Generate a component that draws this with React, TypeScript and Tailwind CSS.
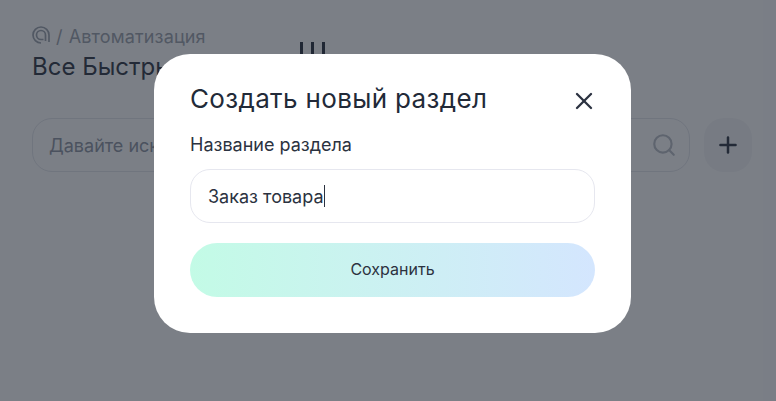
import { Plus, Search, X } from 'lucide-react';

const font = "font-['Inter','Noto_Sans',sans-serif]";

const App = () => {
  return (
    <div className={`relative h-[401px] w-[776px] overflow-hidden bg-white ${font}`}>
      {/* Page behind the modal */}
      <div className="pl-8 pr-6 pt-[26px]">
        <div className="flex items-center gap-[6px] text-[18px] leading-[22px] tracking-[0.15px] text-[#9aa0ab]">
          <svg width="18" height="18" viewBox="0 0 18 18" fill="none" stroke="currentColor" strokeWidth="1.7" className="-mt-[4px]">
            <path d="M17 16V9a8 8 0 1 0-8 8" />
            <path d="M13.5 15V9a4.5 4.5 0 1 0-4.5 4.5h2.5" />
          </svg>
          <span>/</span>
          <span>Автоматизация</span>
        </div>
        <div className="relative mt-[4px] text-[24px] leading-[30px] text-[#2b3240]">
          Все Быстрые ответы
          <div className="absolute left-[268px] top-[-10px] flex gap-[8px]">
            <span className="h-[12px] w-[3px] bg-[#222a38]" />
            <span className="h-[12px] w-[3px] bg-[#222a38]" />
            <span className="h-[12px] w-[3px] bg-[#222a38]" />
          </div>
        </div>
        <div className="mt-[36px] flex gap-[14px]">
          <div className="flex h-[54px] w-[658px] items-center justify-between rounded-[20px] border border-[#e4e6ec] pl-[16px] pr-[12px] text-[#8b91a0]">
            <span className="text-[18px]">Давайте искать</span>
            <Search size={26} strokeWidth={2} className="text-[#b9bdc6]" />
          </div>
          <div className="flex h-[54px] w-[48px] items-center justify-center rounded-[20px] bg-[#f5f6f8] text-[#2b3240]">
            <Plus size={26} strokeWidth={2.3} />
          </div>
        </div>
      </div>

      {/* Overlay */}
      <div className="absolute inset-0 bg-[#1e2532]/[.59] pl-[154px] pt-[54px]">
        <div className="flex h-[279px] w-[477px] flex-col rounded-[36px] bg-white px-9 pt-[27px]">
          <div className="flex items-center justify-between">
            <h2 className="text-[26px] leading-[36px] tracking-[0.35px] text-[#222a38]">Создать новый раздел</h2>
            <X size={28} strokeWidth={2} className="mr-[-3px] mt-1 text-[#2b3240]" />
          </div>
          <label className="mt-[16px] text-[18px] leading-[24px] text-[#2b3240]">Название раздела</label>
          <div className="mt-[12px] flex h-[54px] items-center rounded-[20px] border border-[#e6e7ef] pl-[17px] text-[18px] text-[#2b3240]">
            Заказ товара
            <span className="h-[22px] w-px bg-[#2b3240]" />
          </div>
          <button className="mt-[20px] h-[54px] rounded-[27px] bg-gradient-to-r from-[#c3fbe6] to-[#d4e6fe] pb-[2px] text-[16px] text-[#2b3240]">
            Сохранить
          </button>
        </div>
      </div>
    </div>
  );
};

export default App;
